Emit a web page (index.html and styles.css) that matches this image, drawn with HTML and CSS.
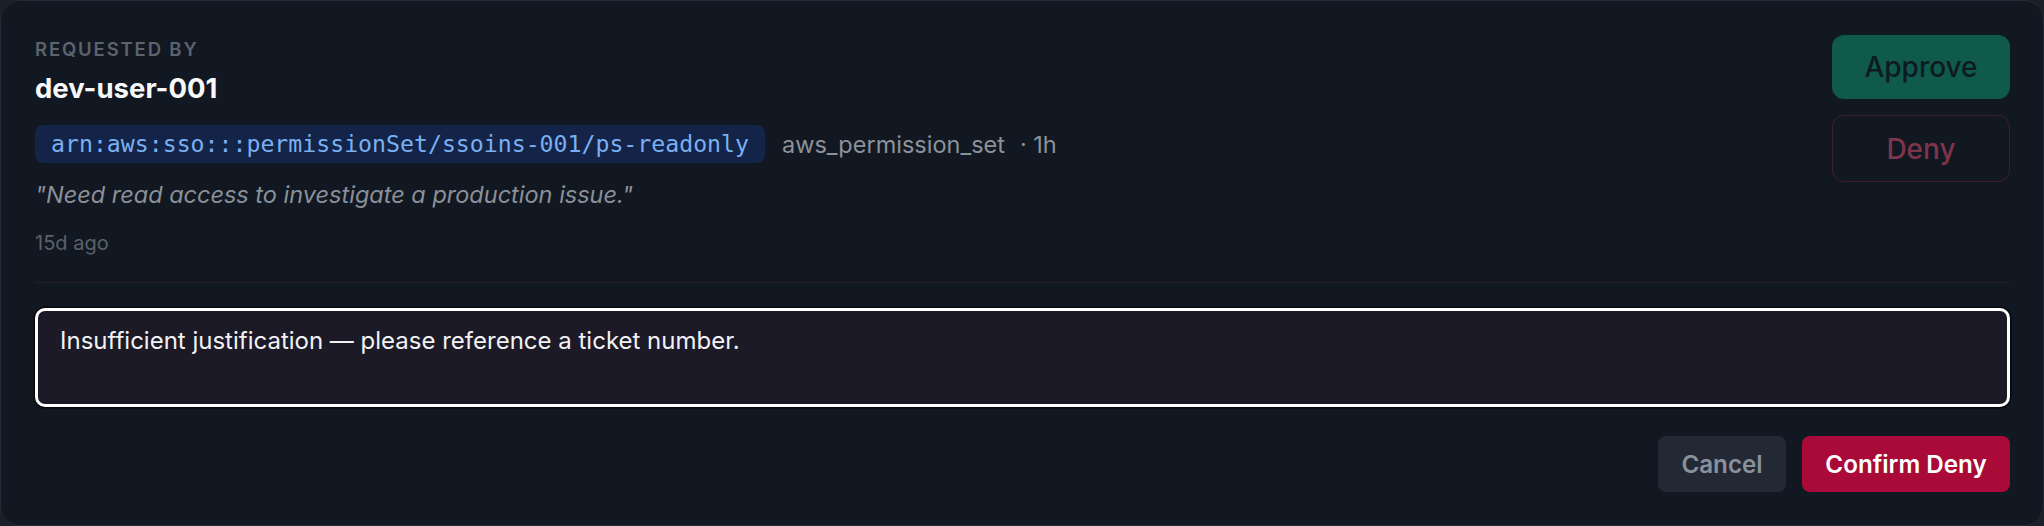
FILE: index.html
```html
<!DOCTYPE html>
<html lang="en">
<head>
<meta charset="utf-8">
<title>Access request</title>
<link rel="stylesheet" href="styles.css">
</head>
<body>
<div class="card">
  <div class="header">
    <div class="info">
      <div class="label">REQUESTED BY</div>
      <div class="name">dev-user-001</div>
      <div class="meta-row">
        <span class="chip">arn:aws:sso:::permissionSet/ssoins-001/ps-readonly</span>
        <span class="meta">aws_permission_set</span>
        <span class="meta dur">· 1h</span>
      </div>
      <div class="quote">"Need read access to investigate a production issue."</div>
      <div class="age">15d ago</div>
    </div>
    <div class="side-actions">
      <button class="btn-approve">Approve</button>
      <button class="btn-deny">Deny</button>
    </div>
  </div>
  <div class="reason">Insufficient justification — please reference a ticket number.</div>
  <div class="footer">
    <button class="btn-cancel">Cancel</button>
    <button class="btn-confirm">Confirm Deny</button>
  </div>
</div>
</body>
</html>
```

FILE: styles.css
```css
* { box-sizing: border-box; }
html, body { margin: 0; padding: 0; background: #1a2029; }
body { font-family: Inter, "Noto Sans", sans-serif; }

.card {
  width: 2044px;
  height: 526px;
  background: #121821;
  border: 1px solid #222a35;
  border-radius: 20px;
  padding: 33px 33px 33px 34px;
  display: flex;
  flex-direction: column;
}

.header {
  display: flex;
  justify-content: space-between;
  align-items: flex-start;
  border-bottom: 1px solid #2a1c2a;
  padding-bottom: 26px;
}

.info { display: flex; flex-direction: column; }

.label {
  margin-top: 2px;
  font-size: 18.5px;
  line-height: 26px;
  font-weight: 600;
  letter-spacing: 0.1em;
  color: #5c636d;
}

.name {
  margin-top: 10px;
  font-size: 27.5px;
  line-height: 32px;
  font-weight: 700;
  color: #f7f8fa;
}

.meta-row {
  margin-top: 21px;
  display: flex;
  align-items: center;
}

.chip {
  display: inline-block;
  height: 38px;
  line-height: 38px;
  padding: 0 16px;
  border-radius: 8px;
  background: #132448;
  color: #7ab0f2;
  font-family: "DejaVu Sans Mono", "Liberation Mono", monospace;
  font-size: 23.2px;
}

.meta {
  font-size: 23.5px;
  color: #8b929b;
  margin-left: 17px;
}

.meta.dur { margin-left: 15px; }

.quote {
  margin-top: 17px;
  font-size: 23.5px;
  line-height: 30px;
  font-style: italic;
  color: #8a9099;
}

.age {
  margin-top: 20px;
  font-size: 20px;
  line-height: 26px;
  color: #5a616b;
}

.side-actions {
  width: 178px;
  display: flex;
  flex-direction: column;
  gap: 16px;
  margin-top: 1px;
}

button {
  font-family: Inter, "Noto Sans", sans-serif;
  cursor: pointer;
}

.btn-approve {
  height: 64px;
  border: none;
  border-radius: 12px;
  background: #0f5a4b;
  color: #0e1a23;
  font-size: 28px;
  font-weight: 500;
}

.btn-deny {
  height: 67px;
  border: 1.5px solid #431d2d;
  border-radius: 12px;
  background: transparent;
  color: #7f3549;
  font-size: 28px;
  font-weight: 500;
}

.reason {
  margin-top: 25px;
  height: 99px;
  border: 3px solid #ffffff;
  border-radius: 10px;
  box-shadow: 0 0 0 1.5px #06080c;
  background: #1c1a26;
  color: #f2f2f5;
  font-size: 24px;
  line-height: 32px;
  padding: 14px 22px 12px;
}

.footer {
  margin-top: 29px;
  display: flex;
  justify-content: flex-end;
  gap: 16px;
}

.btn-cancel {
  width: 128px;
  height: 56px;
  border: none;
  border-radius: 8px;
  background: #222934;
  color: #8a919b;
  font-size: 24.2px;
  font-weight: 600;
}

.btn-confirm {
  width: 208px;
  height: 56px;
  border: none;
  border-radius: 8px;
  background: #a90a38;
  color: #ffffff;
  font-size: 24.2px;
  font-weight: 600;
}
```
